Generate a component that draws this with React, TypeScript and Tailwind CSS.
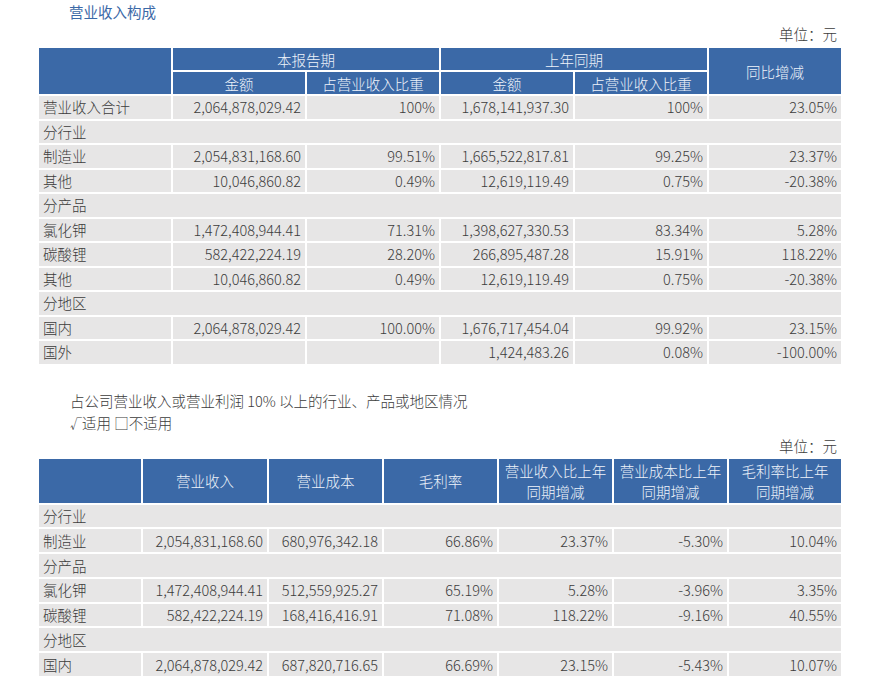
import React from "react";

const FONT = "font-['Noto_Sans_CJK_SC','Noto_Sans',sans-serif]";

type Row = { label: string; cells?: string[] };

const incomeRows: Row[] = [
  { label: "营业收入合计", cells: ["2,064,878,029.42", "100%", "1,678,141,937.30", "100%", "23.05%"] },
  { label: "分行业" },
  { label: "制造业", cells: ["2,054,831,168.60", "99.51%", "1,665,522,817.81", "99.25%", "23.37%"] },
  { label: "其他", cells: ["10,046,860.82", "0.49%", "12,619,119.49", "0.75%", "-20.38%"] },
  { label: "分产品" },
  { label: "氯化钾", cells: ["1,472,408,944.41", "71.31%", "1,398,627,330.53", "83.34%", "5.28%"] },
  { label: "碳酸锂", cells: ["582,422,224.19", "28.20%", "266,895,487.28", "15.91%", "118.22%"] },
  { label: "其他", cells: ["10,046,860.82", "0.49%", "12,619,119.49", "0.75%", "-20.38%"] },
  { label: "分地区" },
  { label: "国内", cells: ["2,064,878,029.42", "100.00%", "1,676,717,454.04", "99.92%", "23.15%"] },
  { label: "国外", cells: ["", "", "1,424,483.26", "0.08%", "-100.00%"] },
];

const marginRows: Row[] = [
  { label: "分行业" },
  { label: "制造业", cells: ["2,054,831,168.60", "680,976,342.18", "66.86%", "23.37%", "-5.30%", "10.04%"] },
  { label: "分产品" },
  { label: "氯化钾", cells: ["1,472,408,944.41", "512,559,925.27", "65.19%", "5.28%", "-3.96%", "3.35%"] },
  { label: "碳酸锂", cells: ["582,422,224.19", "168,416,416.91", "71.08%", "118.22%", "-9.16%", "40.55%"] },
  { label: "分地区" },
  { label: "国内", cells: ["2,064,878,029.42", "687,820,716.65", "66.69%", "23.15%", "-5.43%", "10.07%"] },
];

const head = "bg-[#3b69a7] text-[#eef3fa] flex items-center justify-center text-center leading-[21px]";
const cell = "bg-[#e7e6e6] flex items-center px-[4px] whitespace-nowrap";

function BodyRows({ rows, span }: { rows: Row[]; span: string }) {
  return (
    <>
      {rows.map((r, i) =>
        r.cells ? (
          <React.Fragment key={i}>
            <div className={cell}>{r.label}</div>
            {r.cells.map((c, j) => (
              <div key={j} className={`${cell} justify-end`}>
                {c}
              </div>
            ))}
          </React.Fragment>
        ) : (
          <div key={i} className={`${cell} ${span}`}>
            {r.label}
          </div>
        )
      )}
    </>
  );
}

export default function App() {
  return (
    <div className={`${FONT} bg-white text-[#3c3c3c] text-[14.5px] font-light w-[879px] h-[682px] overflow-hidden pl-[39px]`}>
      <div className="w-[802px]">
        <h2 className="text-[#3b69a7] text-[14.5px] font-normal leading-[20px] pl-[30px] pt-[2px]">营业收入构成</h2>
        <div className="text-right pr-[4px] leading-[20px] mt-[2px]">单位：元</div>

        {/* Revenue composition */}
        <div className="grid grid-cols-[132px_132px_132px_132px_132px_132px] grid-rows-[22px_22px] auto-rows-[22.5px] gap-[2px] mt-[4px]">
          <div className={`${head} row-span-2`} />
          <div className={`${head} col-span-2`}>本报告期</div>
          <div className={`${head} col-span-2`}>上年同期</div>
          <div className={`${head} row-span-2`}>同比增减</div>
          <div className={head}>金额</div>
          <div className={head}>占营业收入比重</div>
          <div className={head}>金额</div>
          <div className={head}>占营业收入比重</div>
          <BodyRows rows={incomeRows} span="col-span-6" />
        </div>

        <div className="pl-[31px] leading-[22px] mt-[26px]">
          <div>占公司营业收入或营业利润 10% 以上的行业、产品或地区情况</div>
          <div>
            <span className="text-[12px]">√</span>适用 □不适用
          </div>
        </div>
        <div className="text-right pr-[4px] leading-[20px] mt-[1px]">单位：元</div>

        {/* Share above 10% */}
        <div className="grid grid-cols-[102px_124px_113px_113px_113px_113px_112px] grid-rows-[44px] auto-rows-[22.8px] gap-[2px] mt-[3px]">
          <div className={head} />
          <div className={head}>营业收入</div>
          <div className={head}>营业成本</div>
          <div className={head}>毛利率</div>
          <div className={head}>
            营业收入比上年
            <br />
            同期增减
          </div>
          <div className={head}>
            营业成本比上年
            <br />
            同期增减
          </div>
          <div className={head}>
            毛利率比上年
            <br />
            同期增减
          </div>
          <BodyRows rows={marginRows} span="col-span-7" />
        </div>
      </div>
    </div>
  );
}
